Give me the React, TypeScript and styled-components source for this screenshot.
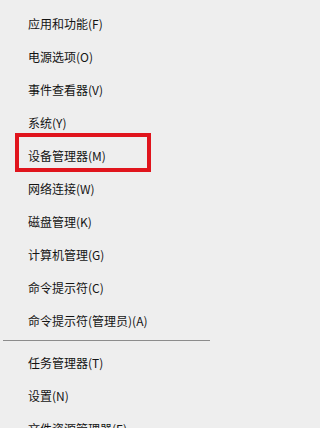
import React from "react";
import styled, { createGlobalStyle } from "styled-components";

const Global = createGlobalStyle`
  html, body { margin: 0; padding: 0; background: #eeeeee; }
  body { width: 210px; height: 428px; overflow: hidden; }
`;

const Menu = styled.div`
  width: 210px;
  height: 428px;
  background: #eeeeee;
  padding-top: 7px;
  box-sizing: border-box;
  overflow: hidden;
  font-family: "Noto Sans CJK SC", "Microsoft YaHei", sans-serif;
`;

const Item = styled.div<{ $highlight?: boolean }>`
  position: relative;
  height: 33px;
  display: flex;
  align-items: center;
  padding-left: 28px;
  font-size: 12px;
  color: #141414;
  white-space: nowrap;
  ${(p) =>
    p.$highlight &&
    `
    &::after {
      content: "";
      position: absolute;
      left: 15px;
      top: -6px;
      width: 136px;
      height: 39px;
      box-sizing: border-box;
      border: 4px solid #e0141c;
    }
  `}
`;

const Separator = styled.div`
  height: 1px;
  background: #8c8c8c;
  margin: 3px 0 5px 3px;
`;

const groupA = [
  "应用和功能(F)",
  "电源选项(O)",
  "事件查看器(V)",
  "系统(Y)",
  "设备管理器(M)",
  "网络连接(W)",
  "磁盘管理(K)",
  "计算机管理(G)",
  "命令提示符(C)",
  "命令提示符(管理员)(A)",
];

const groupB = ["任务管理器(T)", "设置(N)", "文件资源管理器(E)"];

export default function App() {
  return (
    <>
      <Global />
      <Menu>
        {groupA.map((t) => (
          <Item key={t} $highlight={t === "设备管理器(M)"}>
            {t}
          </Item>
        ))}
        <Separator />
        {groupB.map((t) => (
          <Item key={t}>{t}</Item>
        ))}
      </Menu>
    </>
  );
}
